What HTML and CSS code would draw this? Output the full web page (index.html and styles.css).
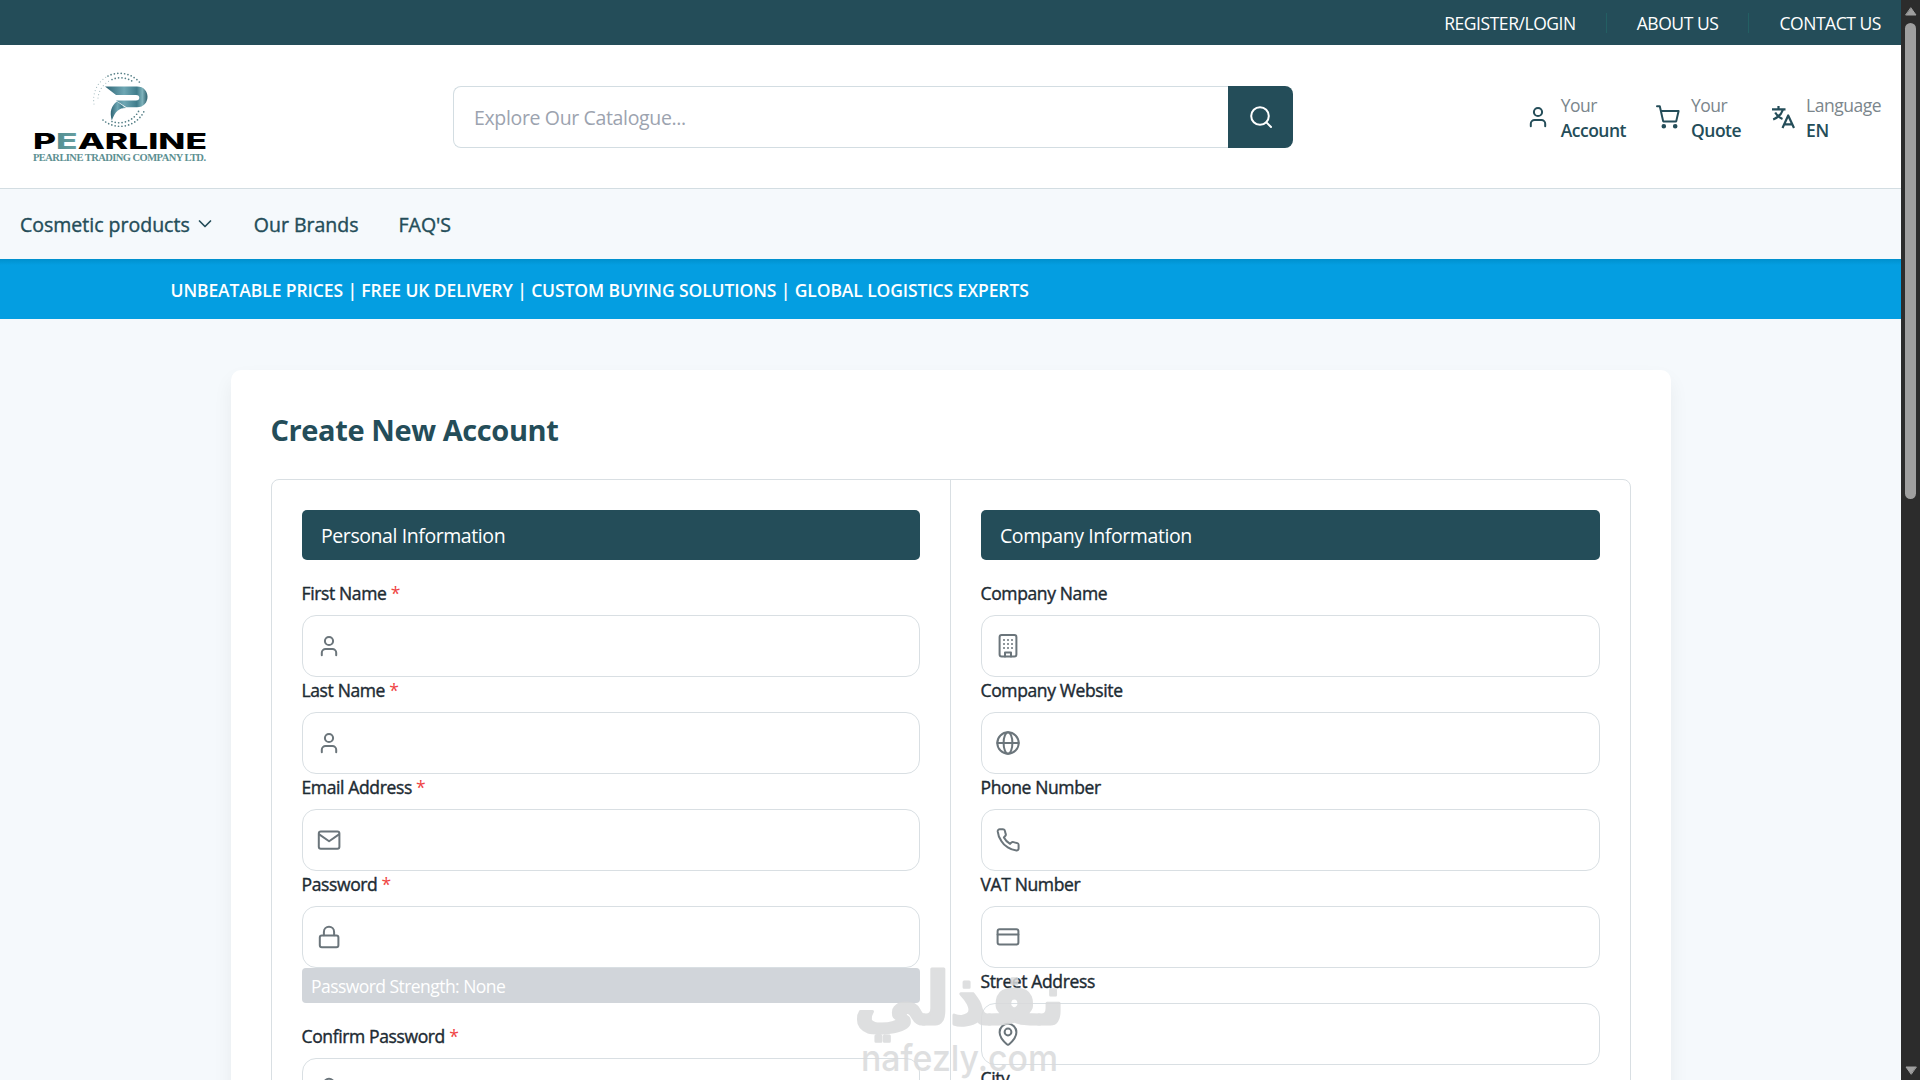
FILE: index.html
```html
<!DOCTYPE html>
<html lang="en">
  <head>
    <meta charset="UTF-8" />
    <meta name="viewport" content="width=device-width, initial-scale=1.0" />
    <title>Pearline | Create New Account</title>
    <link rel="stylesheet" href="styles.css">
  </head>
  <body>
    <!-- icons shared by the header and the form -->
    <svg class="sprite" width="0" height="0">
      <symbol id="user" viewBox="0 0 24 24">
        <circle cx="12" cy="7" r="4.1" />
        <path d="M19.2 21.2v-2.4a3.8 3.8 0 0 0-3.8-3.8H8.6a3.8 3.8 0 0 0-3.8 3.8v2.4" />
      </symbol>
      <symbol id="mail" viewBox="0 0 24 24">
        <rect x="1.8" y="3.4" width="20.6" height="17.4" rx="2" />
        <path d="M2.2 6.4l9.9 6.8 9.9-6.8" />
      </symbol>
      <symbol id="lock" viewBox="0 0 24 24">
        <rect x="2.8" y="10.4" width="18.6" height="11.8" rx="2" />
        <path d="M6.9 10.2V6.9a5.1 5.1 0 0 1 10.2 0v3.3" />
      </symbol>
      <symbol id="building" viewBox="0 0 24 24">
        <rect x="3.6" y="1" width="16.8" height="21.6" rx="2" />
        <path d="M9 22.4v-4h6v4" />
        <path d="M8 6h.01M12 6h.01M16 6h.01M8 10h.01M12 10h.01M16 10h.01M8 14h.01M12 14h.01M16 14h.01" />
      </symbol>
      <symbol id="globe" viewBox="0 0 24 24">
        <circle cx="12" cy="12" r="10.7" />
        <ellipse cx="12" cy="12" rx="4.4" ry="10.7" />
        <path d="M1.3 12h21.4" />
      </symbol>
      <symbol id="phone" viewBox="0 0 24 24">
        <path d="M22.600 16.920v3.600a2 2 0 0 1-2.180 2 19.790 19.790 0 0 1-8.630-3.070 19.500 19.500 0 0 1-6.500-6.500A19.790 19.790 0 0 1 1.700 3.400 2 2 0 0 1 3.700 1.300h3.300a2 2 0 0 1 2 1.720 12.840 12.840 0 0 0 .7 2.810 2 2 0 0 1-.45 2.110L7.900 9.500a16 16 0 0 0 6.200 6.400l1.270-1.270a2 2 0 0 1 2.110-.45 12.840 12.840 0 0 0 3.400.7 2 2 0 0 1 1.720 2.040z" />
      </symbol>
      <symbol id="card" viewBox="0 0 24 24">
        <rect x="1.6" y="4.2" width="20.8" height="15.4" rx="2" />
        <path d="M1.6 9.4h20.8" />
      </symbol>
      <symbol id="pin" viewBox="0 0 24 24">
        <path d="M20.4 10.2c0 5-5.6 10.6-7.5 12.2a1.3 1.3 0 0 1-1.8 0C9.200 20.8 3.600 15.200 3.600 10.200a8.400 8.400 0 0 1 16.800 0" />
        <circle cx="12" cy="10" r="3.4" />
      </symbol>
    </svg>

    <div class="page">
      <div class="topbar">
        <a href="#">REGISTER/LOGIN</a>
        <a href="#">ABOUT US</a>
        <a href="#">CONTACT US</a>
      </div>

      <header>
        <a class="logo" href="#">
          <svg width="178" height="94" viewBox="0 0 178 94">
            <defs>
              <linearGradient id="teal" x1="0" x2="1">
                <stop offset="0" stop-color="#2f6575" />
                <stop offset="0.45" stop-color="#6ea7b4" />
                <stop offset="0.75" stop-color="#3f7c8b" />
                <stop offset="0.88" stop-color="#7fb2bb" />
                <stop offset="1" stop-color="#2d5f6c" />
              </linearGradient>
              <linearGradient id="letter" x1="0" x2="1">
                <stop offset="0" stop-color="#3b7b80" />
                <stop offset="0.6" stop-color="#a5d0cd" />
                <stop offset="1" stop-color="#4b8a8b" />
              </linearGradient>
            </defs>
            <path class="dots faint" d="M62 34A26.500 26.500 0 0 1 76 6" />
            <path class="dots faint" d="M66 28A22 22 0 0 1 77 11" />
            <path class="dots" d="M76 6A26.500 26.500 0 0 1 109 14" />
            <path class="dots" d="M80 9.500A22 22 0 0 1 100 11" />
            <path class="dots" d="M71 50A26.500 26.500 0 0 0 113 39" />
            <path class="dots" d="M80 51.500A22 22 0 0 0 107 40.500" />
            <path fill="url(#teal)" d="M73 16.500h32c7 0 10.500 5 10.500 10.200S112 37.300 105 37.300H94.500L84 30.400h20c2.400 0 3.300-1.200 3.300-2.700s-.9-2.700-3.300-2.700H84z" />
            <path fill="url(#teal)" d="M94 38c-7 0-10.500 3-14.200 12.500-2.500-9-.4-15 5.200-19z" />
            <text class="wordmark" x="1" y="78.500" textLength="174" lengthAdjust="spacingAndGlyphs">P<tspan fill="url(#letter)">E</tspan>ARLINE</text>
            <text class="tagline" x="1" y="91" textLength="173">PEARLINE TRADING COMPANY LTD.</text>
          </svg>
        </a>

        <form class="search">
          <input type="text" placeholder="Explore Our Catalogue...">
          <button type="button" aria-label="Search">
            <svg width="24" height="24" viewBox="0 0 24 24">
              <circle cx="11" cy="11" r="8.800" />
              <path d="M17.400 17.400L22 22" />
            </svg>
          </button>
        </form>

        <div class="actions">
          <a class="action" href="#">
            <svg class="icon"><use href="#user" /></svg>
            <span><small>Your</small><b>Account</b></span>
          </a>
          <a class="action" href="#">
            <svg class="icon" viewBox="0 0 24 24">
              <path d="M1 1.200h2.800l3.400 15.200h13L22.600 6H5" />
              <circle class="solid" cx="7.800" cy="21.300" r="1.300" />
              <circle class="solid" cx="19.200" cy="21.300" r="1.300" />
            </svg>
            <span><small>Your</small><b>Quote</b></span>
          </a>
          <a class="action" href="#">
            <svg class="icon language" viewBox="0 0 24 24">
              <path d="M1 4.300h13.500M7.500 1v3M12 4.600C10.500 9 7 12.500 2.200 14.400M4.200 7.500c1.700 3 4.300 5.300 7.300 6.500M11.500 23l5.700-12.500L23 23M13.300 19.300h7.800" />
            </svg>
            <span><small>Language</small><b>EN</b></span>
          </a>
        </div>
      </header>

      <nav>
        <a href="#">Cosmetic products
          <svg width="14" height="10" viewBox="0 0 14 10"><path d="M1.500 2l5.500 5.500L12.500 2" /></svg>
        </a>
        <a href="#">Our Brands</a>
        <a href="#">FAQ'S</a>
      </nav>

      <div class="banner">UNBEATABLE PRICES | FREE UK DELIVERY | CUSTOM BUYING SOLUTIONS | GLOBAL LOGISTICS EXPERTS</div>

      <main>
        <h1>Create New Account</h1>
        <div class="columns">
          <section>
            <h2>Personal Information</h2>
            <label>First Name <i>*</i></label>
            <div class="field"><svg class="icon"><use href="#user" /></svg></div>
            <label>Last Name <i>*</i></label>
            <div class="field"><svg class="icon"><use href="#user" /></svg></div>
            <label>Email Address <i>*</i></label>
            <div class="field"><svg class="icon"><use href="#mail" /></svg></div>
            <label>Password <i>*</i></label>
            <div class="field"><svg class="icon"><use href="#lock" /></svg></div>
            <div class="strength">Password Strength: None</div>
            <label>Confirm Password <i>*</i></label>
            <div class="field"><svg class="icon"><use href="#lock" /></svg></div>
          </section>
          <section>
            <h2>Company Information</h2>
            <label>Company Name</label>
            <div class="field"><svg class="icon"><use href="#building" /></svg></div>
            <label>Company Website</label>
            <div class="field"><svg class="icon"><use href="#globe" /></svg></div>
            <label>Phone Number</label>
            <div class="field"><svg class="icon"><use href="#phone" /></svg></div>
            <label>VAT Number</label>
            <div class="field"><svg class="icon"><use href="#card" /></svg></div>
            <label>Street Address</label>
            <div class="field"><svg class="icon"><use href="#pin" /></svg></div>
            <label>City</label>
          </section>
        </div>
      </main>
    </div>

    <div class="scrollbar">
      <svg width="12" height="9" viewBox="0 0 12 9"><path d="M6 1l5 7H1z" /></svg>
      <div class="track"><div class="thumb"></div></div>
      <svg width="12" height="9" viewBox="0 0 12 9"><path d="M6 8L1 1h10z" /></svg>
    </div>

    <svg class="watermark" width="216" height="115" viewBox="0 0 216 115">
      <text class="arabic" x="212" y="59" direction="rtl" textLength="211" lengthAdjust="spacingAndGlyphs">نفذلي</text>
      <text class="latin" x="8" y="106" textLength="197" lengthAdjust="spacingAndGlyphs">nafezly.com</text>
    </svg>
  </body>
</html>
```

FILE: styles.css
```css
* {
  box-sizing: border-box;
}

body {
  display: flex;
  height: 1080px;
  margin: 0;
  overflow: hidden;
  font-family: "Open Sans", "Noto Sans", sans-serif;
  font-size: 17.5px;
  color: #1d2b33;
  background-color: #f5f9fc;
}

a {
  color: inherit;
  text-decoration: none;
}

svg {
  fill: none;
  stroke: currentColor;
  stroke-width: 2;
  stroke-linecap: round;
  stroke-linejoin: round;
}

.sprite {
  position: absolute;
}

.icon {
  width: 24px;
  height: 24px;
  flex: none;
  stroke-width: 2;
}

.page {
  width: 1901px;
  height: 1080px;
  flex: none;
  overflow: hidden;
}

.topbar {
  display: flex;
  justify-content: flex-end;
  align-items: center;
  height: 45px;
  padding-right: 20px;
  color: #fff;
  background-color: #244d59;
  letter-spacing: -0.45px;
}

.topbar a {
  line-height: 20px;
}

.topbar a + a {
  margin-left: 30px;
  padding-left: 30px;
  border-left: 1px solid #235f63;
}

header {
  display: flex;
  align-items: center;
  height: 144px;
  padding: 0 20px 0 32px;
  background-color: #fff;
  border-bottom: 1px solid #d3dde2;
}

.logo {
  width: 421px;
}

.logo svg {
  display: block;
  stroke: none;
}

.logo .dots {
  stroke: #557f86;
  stroke-width: 1.7;
  stroke-dasharray: 0 3.4;
}

.logo .faint {
  stroke: #a9bfc3;
  stroke-width: 1.2;
}

.wordmark {
  font: 800 21px "Inter", sans-serif;
  fill: #000;
}

.tagline {
  font: bold 10.5px "Liberation Serif", serif;
  fill: #5c9092;
}

.search {
  display: flex;
  width: 840px;
  height: 62px;
}

.search input {
  flex: 1;
  padding: 2px 20px 0;
  border: 1px solid #d3dde2;
  border-right: none;
  border-radius: 8px 0 0 8px;
  font: inherit;
  font-size: 19.5px;
  letter-spacing: -0.35px;
}

.search input::placeholder {
  color: #9ca3af;
}

.search button {
  display: flex;
  align-items: center;
  justify-content: center;
  width: 65px;
  border: none;
  border-radius: 0 8px 8px 0;
  color: #fff;
  background-color: #244d59;
}

.actions {
  display: flex;
  gap: 30px;
  margin-left: auto;
}

.action {
  display: flex;
  align-items: center;
  gap: 11px;
  color: #244d59;
  letter-spacing: -0.5px;
}

.action .icon.language {
  stroke-linecap: butt;
  stroke-width: 2.2;
}

.action .solid {
  fill: currentColor;
}

.action span {
  padding-top: 2px;
}

.action small,
.action b {
  display: block;
  font-size: 17.5px;
  line-height: 25px;
}

.action small {
  color: #7b868c;
}

.action b {
  font-weight: 600;
}

nav {
  display: flex;
  align-items: center;
  gap: 40px;
  height: 70px;
  padding: 1px 0 0 20px;
  font-size: 19.5px;
  -webkit-text-stroke: 0.4px;
  color: #244d59;
}

nav svg {
  margin: 0 2px 3px 3px;
  stroke-width: 1.7;
}

.banner {
  height: 60px;
  padding-left: 170.5px;
  line-height: 63px;
  font-weight: 600;
  letter-spacing: -0.1px;
  color: #fff;
  background: linear-gradient(#0090cd, #049ee1 6px);
}

main {
  width: 1440px;
  margin: 51px auto 0;
  padding: 40px;
  background-color: #fff;
  border-radius: 10px;
  box-shadow: 0 10px 20px rgba(0, 0, 0, 0.06);
}

h1 {
  margin: 0 0 29px;
  font-size: 29px;
  line-height: 40px;
  letter-spacing: -0.4px;
  color: #244d59;
}

.columns {
  display: grid;
  grid-template-columns: 1fr 1fr;
  border: 1px solid #d9dfe3;
  border-radius: 8px;
}

section {
  padding: 30px;
}

section:first-child {
  border-right: 1px solid #d9dfe3;
}

h2 {
  height: 50px;
  margin: 0 0 20px;
  padding-left: 19.5px;
  font-size: 19.5px;
  font-weight: 400;
  line-height: 52px;
  letter-spacing: -0.42px;
  color: #fff;
  background-color: #244d59;
  border-radius: 5px;
}

label {
  display: block;
  height: 35px;
  line-height: 27px;
  letter-spacing: -0.37px;
  -webkit-text-stroke: 0.4px;
}

label i {
  font-style: normal;
  color: #ef4444;
  -webkit-text-stroke: 0;
}

.field {
  display: flex;
  align-items: center;
  height: 62px;
  padding-left: 14px;
  border: 1px solid #d9dfe3;
  border-radius: 14px;
  color: #6b757b;
}

.strength {
  height: 35px;
  margin-bottom: 20px;
  padding-left: 9.5px;
  line-height: 37px;
  letter-spacing: -0.55px;
  color: #fff;
  background-color: #d1d5da;
  border-radius: 4px;
}

/* dark window scrollbar */
.scrollbar {
  display: flex;
  flex-direction: column;
  align-items: center;
  width: 19px;
  padding: 7px 0 5px;
  background-color: #2c2c2c;
}

.scrollbar svg {
  flex: none;
  fill: #9f9f9f;
  stroke: #9f9f9f;
  stroke-width: 1;
}

.track {
  flex: 1;
  padding-top: 7px;
}

.thumb {
  width: 11px;
  height: 476px;
  border-radius: 6px;
  background-color: #9f9f9f;
}

.watermark {
  position: absolute;
  left: 853px;
  top: 965px;
  stroke: none;
  fill: #d9dadb;
  opacity: 0.85;
}

.arabic {
  font: bold 72px "DejaVu Sans", sans-serif;
  stroke: #d9dadb;
  stroke-width: 3;
}

.latin {
  font: 500 36px "Inter", sans-serif;
}
```
